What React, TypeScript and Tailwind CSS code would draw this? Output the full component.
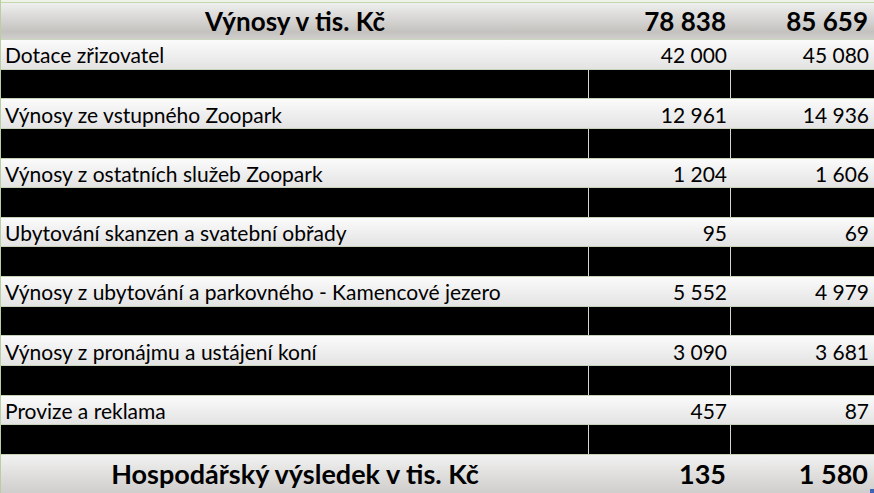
import React from "react";

const rows: [string, string, string][] = [
  ["Dotace zřizovatel", "42 000", "45 080"],
  ["Výnosy ze vstupného Zoopark", "12 961", "14 936"],
  ["Výnosy z ostatních služeb Zoopark", "1 204", "1 606"],
  ["Ubytování skanzen a svatební obřady", "95", "69"],
  ["Výnosy z ubytování a parkovného - Kamencové jezero", "5 552", "4 979"],
  ["Výnosy z pronájmu a ustájení koní", "3 090", "3 681"],
  ["Provize a reklama", "457", "87"],
];

const font = { fontFamily: "Lato, 'Liberation Sans', sans-serif" };

export default function App() {
  return (
    <div
      className="relative w-[874px] h-[493px] flex flex-col bg-white text-black overflow-hidden border-l border-[#b9cfa3]"
      style={font}
    >
      <div className="h-[2px] bg-[#eef3e8]" />
      <div className="h-[38px] grid grid-cols-[588px_142px_143px] border-t border-[#c3d6ae] border-b border-b-[#c9d6bc] bg-gradient-to-b from-[#efefef] via-[#c4c2bf] via-80% to-[#d0cfcd]">
        <div className="flex items-center justify-center text-[26px] font-bold leading-none">
          Výnosy v tis. Kč
        </div>
        <div className="flex items-center justify-end pr-[5px] text-[26px] font-bold leading-none">
          78 838
        </div>
        <div className="flex items-center justify-end pr-[6px] text-[26px] font-bold leading-none">
          85 659
        </div>
      </div>
      <div className="flex-1 flex flex-col">
        {rows.map(([label, a, b]) => (
          <React.Fragment key={label}>
            <div className="flex-1 grid grid-cols-[588px_142px_143px] bg-gradient-to-b from-[#fbfbfb] to-[#e3e3e3] border-b border-[#c6d3b8]">
              <div className="flex items-center pl-[4px] pt-[1px] text-[21px] leading-none whitespace-nowrap">
                {label}
              </div>
              <div className="flex items-center justify-end pr-[4px] pt-[1px] text-[21px] leading-none">
                {a}
              </div>
              <div className="flex items-center justify-end pr-[5px] pt-[1px] text-[21px] leading-none">
                {b}
              </div>
            </div>
            <div className="flex-1 grid grid-cols-[588px_142px_143px] bg-black border-b border-[#c6d3b8]">
              <div className="border-r border-[#d4d4d4]" />
              <div className="border-r border-[#d4d4d4]" />
              <div />
            </div>
          </React.Fragment>
        ))}
      </div>
      <div className="h-[38px] grid grid-cols-[588px_142px_143px] bg-gradient-to-b from-[#f2f2f2] via-[#d9d8d6] via-70% to-[#cfcecc]">
        <div className="flex items-end pb-[6px] justify-center text-[27px] font-bold leading-none whitespace-nowrap">
          Hospodářský výsledek v tis. Kč
        </div>
        <div className="flex items-end pb-[6px] justify-end pr-[5px] text-[27px] font-bold leading-none">
          135
        </div>
        <div className="flex items-end pb-[6px] justify-end pr-[6px] text-[27px] font-bold leading-none">
          1 580
        </div>
      </div>
      <div className="absolute right-0 bottom-0 w-[4px] h-[4px] bg-[#3b64b4]" />
    </div>
  );
}
